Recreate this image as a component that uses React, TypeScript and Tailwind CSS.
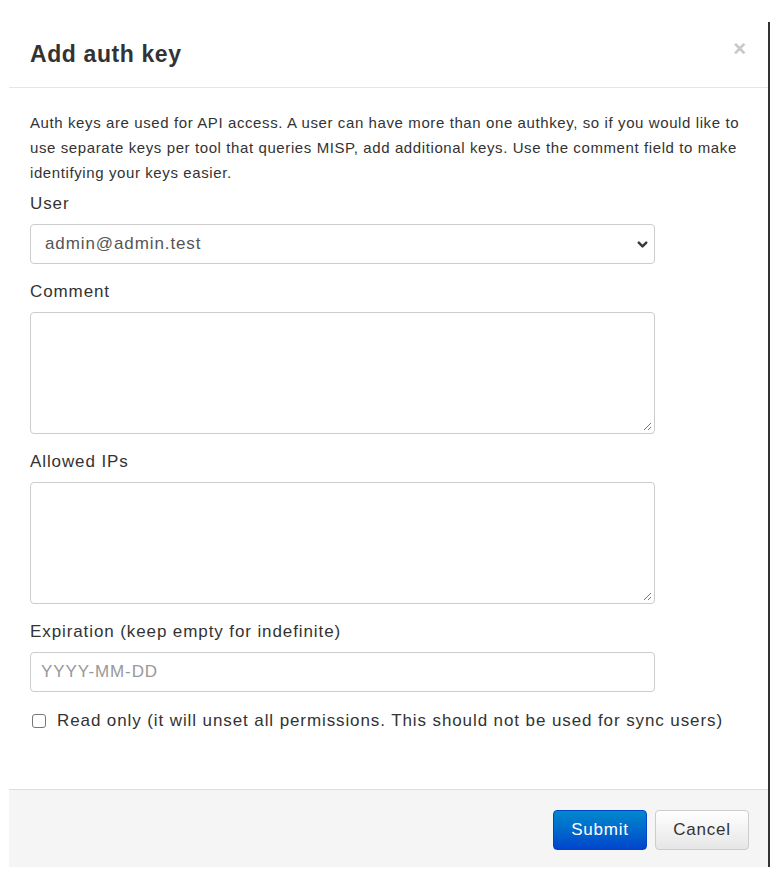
import React from 'react';
import { ChevronDown } from 'lucide-react';

const font = { fontFamily: '"Liberation Sans", Arial, Helvetica, sans-serif' };

const Label: React.FC<{ children: React.ReactNode }> = ({ children }) => (
  <label className="block text-[17px] leading-[20px] tracking-[0.9px] text-[#333] mb-[10px]">{children}</label>
);

export default function App() {
  return (
    <div className="w-full h-[869px] bg-white overflow-hidden" style={font}>
      <div className="ml-[9px] mt-[22px] w-[761px] h-[845px] flex flex-col bg-white border-r-2 border-[#333]">
        {/* header */}
        <div className="h-[66px] flex items-center justify-between pl-[21px] pr-[22px] border-b border-[#e5e5e5]">
          <h3 className="text-[23px] font-bold tracking-[0.6px] text-[#333] leading-none">Add auth key</h3>
          <span className="text-[22px] leading-none text-[#c8c8c8] font-bold -mt-[12px]">×</span>
        </div>

        {/* body */}
        <div className="flex-1 pl-[21px] pr-[21px] pt-[22px]">
          <p className="text-[15px] leading-[25px] text-[#333] tracking-[0.6px]">
            Auth keys are used for API access. A user can have more than one authkey, so if you would like to use
            separate keys per tool that queries MISP, add additional keys. Use the comment field to make identifying your
            keys easier.
          </p>

          <div className="mt-[9px]">
            <Label>User</Label>
            <div className="w-[625px] h-[40px] rounded-[4px] border border-[#ccc] flex items-center justify-between pl-[14px] pr-[4px]">
              <span className="text-[17px] tracking-[0.9px] text-[#555]">admin@admin.test</span>
              <ChevronDown className="w-[15px] h-[15px] text-[#3a3a3a]" strokeWidth={4} />
            </div>
          </div>

          <div className="mt-[18px]">
            <Label>Comment</Label>
            <div className="relative w-[625px] h-[122px] rounded-[4px] border border-[#ccc]">
              <ResizeGrip />
            </div>
          </div>

          <div className="mt-[18px]">
            <Label>Allowed IPs</Label>
            <div className="relative w-[625px] h-[122px] rounded-[4px] border border-[#ccc]">
              <ResizeGrip />
            </div>
          </div>

          <div className="mt-[18px]">
            <Label>Expiration (keep empty for indefinite)</Label>
            <div className="w-[625px] h-[40px] rounded-[4px] border border-[#ccc] flex items-center pl-[10px]">
              <span className="text-[17px] tracking-[0.9px] text-[#999]">YYYY-MM-DD</span>
            </div>
          </div>

          <div className="mt-[16px] flex items-center gap-[11px] pl-[2px]">
            <span className="w-[14px] h-[14px] rounded-[3px] border border-[#767676] bg-white" />
            <span className="text-[17px] tracking-[0.9px] text-[#333]">
              Read only (it will unset all permissions. This should not be used for sync users)
            </span>
          </div>
        </div>

        {/* footer */}
        <div className="h-[78px] bg-[#f5f5f5] border-t border-[#ddd] flex items-center justify-end gap-[8px] pr-[19px] pt-[2px]">
          <button className="w-[94px] h-[40px] rounded-[4px] text-white text-[17px] tracking-[0.8px] border border-[#04c] bg-gradient-to-b from-[#08c] to-[#04c]">
            Submit
          </button>
          <button className="w-[94px] h-[40px] rounded-[4px] text-[#333] text-[17px] tracking-[0.8px] border border-[#ccc] bg-gradient-to-b from-white to-[#e6e6e6]">
            Cancel
          </button>
        </div>
      </div>
    </div>
  );
}

function ResizeGrip() {
  return (
    <svg className="absolute right-[2px] bottom-[2px]" width="9" height="9" viewBox="0 0 9 9">
      <path d="M8 1 L1 8 M8 5 L5 8" stroke="#777" strokeWidth="1" />
    </svg>
  );
}
